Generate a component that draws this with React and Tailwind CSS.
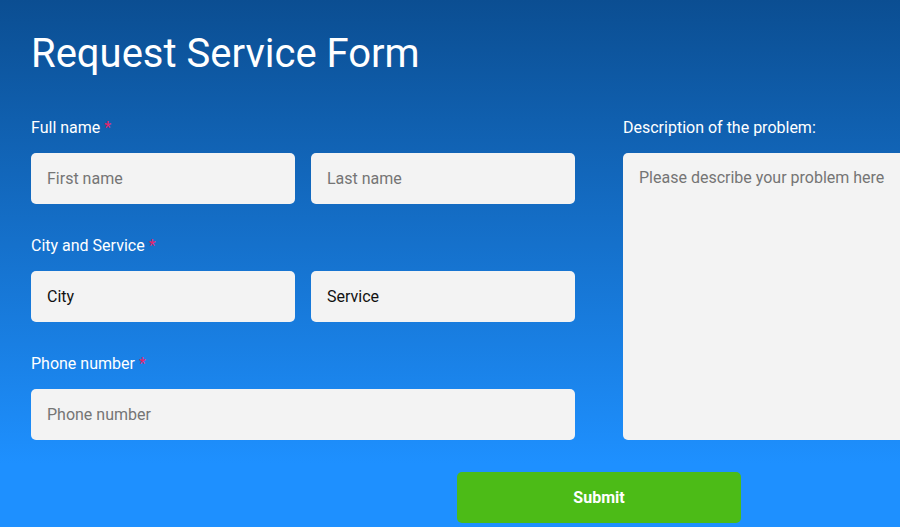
export default function App() {
  const font = { fontFamily: "Roboto, 'Liberation Sans', sans-serif" };
  const Label = ({ children, req }) => (
    <div className="text-[16px] leading-[20px] text-white pt-px mb-[15px] font-normal">
      {children}
      {req && <span className="text-[#e8246a] ml-1">*</span>}
    </div>
  );
  const inputCls =
    "h-[51px] rounded-[5px] bg-[#f3f3f3] px-4 text-[16px] text-[#111] placeholder:text-[#757575] outline-none border-0 w-full";
  return (
    <div
      style={font}
      className="w-[900px] h-[527px] overflow-hidden bg-[linear-gradient(to_bottom,#0b4e92_0%,#1e90ff_88%,#1e90ff_100%)]"
    >
      <div className="w-[1136px] ml-[31px] pt-[30px]">
        <h1 className="text-[40px] leading-[48px] text-white font-normal mb-[39px]">
          Request Service Form
        </h1>
        <div className="flex gap-12">
          <div className="w-[544px] flex flex-col">
            <Label req>Full name</Label>
            <div className="flex gap-4 mb-[31px]">
              <input className={inputCls} placeholder="First name" />
              <input className={inputCls} placeholder="Last name" />
            </div>
            <Label req>City and Service</Label>
            <div className="flex gap-4 mb-[31px]">
              <input className={inputCls} defaultValue="City" />
              <input className={inputCls} defaultValue="Service" />
            </div>
            <Label req>Phone number</Label>
            <input className={inputCls} placeholder="Phone number" />
          </div>
          <div className="w-[544px] flex flex-col">
            <Label>Description of the problem:</Label>
            <textarea
              className="h-[287px] rounded-[5px] bg-[#f3f3f3] px-4 pt-[15px] text-[16px] leading-[20px] text-[#111] placeholder:text-[#757575] outline-none border-0 resize-none"
              placeholder="Please describe your problem here"
            />
          </div>
        </div>
        <div className="flex justify-center mt-8">
          <button className="w-[284px] h-[51px] rounded-[5px] bg-[#4cbb17] text-white font-bold text-[16px]">
            Submit
          </button>
        </div>
      </div>
    </div>
  );
}
